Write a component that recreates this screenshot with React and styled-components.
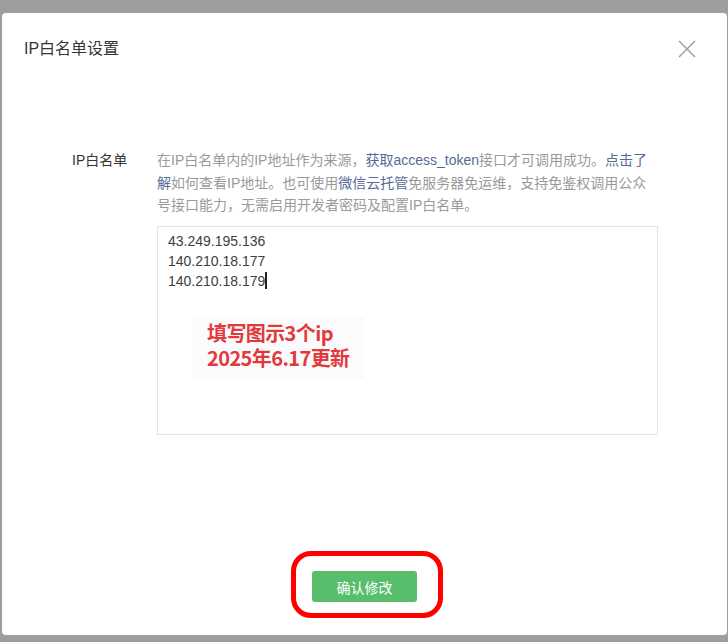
import React from "react";
import styled, { createGlobalStyle } from "styled-components";

const Global = createGlobalStyle`
  html, body { margin: 0; padding: 0; }
  body {
    background: #9e9e9e;
    font-family: "Liberation Sans", "Noto Sans CJK SC", sans-serif;
    -webkit-font-smoothing: antialiased;
  }
`;

const Page = styled.div`
  width: 728px;
  height: 642px;
  box-sizing: border-box;
  padding: 13px 1px 7px 2px;
  display: flex;
`;

const Dialog = styled.div`
  flex: 1;
  background: #fff;
  border-radius: 4px;
  display: flex;
  flex-direction: column;
`;

const Header = styled.div`
  display: flex;
  align-items: center;
  justify-content: space-between;
  padding: 23px 31px 0 22px;
  height: 26px;
`;

const Title = styled.h3`
  margin: 0;
  font-size: 16px;
  font-weight: 400;
  line-height: 24px;
  color: #353535;
`;

const CloseBtn = styled.button`
  border: 0;
  background: none;
  padding: 0;
  width: 18px;
  height: 18px;
  display: flex;
  cursor: pointer;
`;

const Body = styled.div`
  flex: 1;
  padding: 87px 0 0 70px;
  display: flex;
  flex-direction: column;
`;

const FormRow = styled.div`
  display: flex;
  align-items: flex-start;
`;

const Label = styled.label`
  width: 85px;
  font-size: 14px;
  line-height: 22px;
  color: #353535;
`;

const Field = styled.div`
  width: 501px;
  display: flex;
  flex-direction: column;
  gap: 9px;
`;

const Desc = styled.p`
  margin: 0;
  font-size: 14px;
  line-height: 22.5px;
  color: #9a9a9a;
  white-space: nowrap;
`;

const Link = styled.a`
  color: #576b95;
  text-decoration: none;
`;

const TextBox = styled.div`
  position: relative;
  height: 199px;
  border: 1px solid #e4e4e4;
  padding: 4px 10px;
  font-size: 14px;
  line-height: 20px;
  color: #3e3e3e;
`;

const IpLine = styled.div`
  display: flex;
  align-items: center;
`;

const Caret = styled.span`
  display: inline-block;
  width: 1.5px;
  height: 17px;
  background: #222;
`;

const Note = styled.div`
  position: absolute;
  left: 34px;
  top: 90px;
  width: 172px;
  height: 62px;
  box-sizing: border-box;
  padding: 3px 0 0 15px;
  background: #fbfbfb;
  color: #e2393d;
  font-family: "Noto Sans CJK SC", sans-serif;
  font-weight: 700;
  font-size: 20px;
  line-height: 25px;
  letter-spacing: -0.6px;
`;

const NoteLine = styled.div`
  height: 25px;
`;

const Footer = styled.div`
  display: flex;
  justify-content: center;
  padding: 0 0 17px 5px;
`;

const Highlight = styled.div`
  border: 5px solid #f00;
  border-radius: 20px;
  padding: 15px 21px 11px 16px;
  display: flex;
`;

const PrimaryButton = styled.button`
  width: 105px;
  height: 31px;
  border: 0;
  border-radius: 3px;
  background: #59be6b;
  color: #fff;
  font-family: "Noto Sans CJK SC", sans-serif;
  font-size: 14px;
  cursor: pointer;
`;

export default function App() {
  const ips = ["43.249.195.136", "140.210.18.177", "140.210.18.179"];
  return (
    <>
      <Global />
      <Page>
        <Dialog>
          <Header>
            <Title>IP白名单设置</Title>
            <CloseBtn aria-label="关闭">
              <svg width="18" height="18" viewBox="0 0 18 18">
                <path d="M1 1L17 17M17 1L1 17" stroke="#9b9b9b" strokeWidth="1.4" fill="none" />
              </svg>
            </CloseBtn>
          </Header>
          <Body>
            <FormRow>
              <Label>IP白名单</Label>
              <Field>
                <Desc>
                  在IP白名单内的IP地址作为来源，<Link>获取access_token</Link>接口才可调用成功。<Link>点击了</Link>
                  <br />
                  <Link>解</Link>如何查看IP地址。也可使用<Link>微信云托管</Link>免服务器免运维，支持免鉴权调用公众
                  <br />
                  号接口能力，无需启用开发者密码及配置IP白名单。
                </Desc>
                <TextBox>
                  {ips.map((ip, i) => (
                    <IpLine key={ip}>
                      {ip}
                      {i === ips.length - 1 && <Caret />}
                    </IpLine>
                  ))}
                  <Note>
                    <NoteLine>填写图示3个ip</NoteLine>
                    <NoteLine>2025年6.17更新</NoteLine>
                  </Note>
                </TextBox>
              </Field>
            </FormRow>
          </Body>
          <Footer>
            <Highlight>
              <PrimaryButton>确认修改</PrimaryButton>
            </Highlight>
          </Footer>
        </Dialog>
      </Page>
    </>
  );
}
